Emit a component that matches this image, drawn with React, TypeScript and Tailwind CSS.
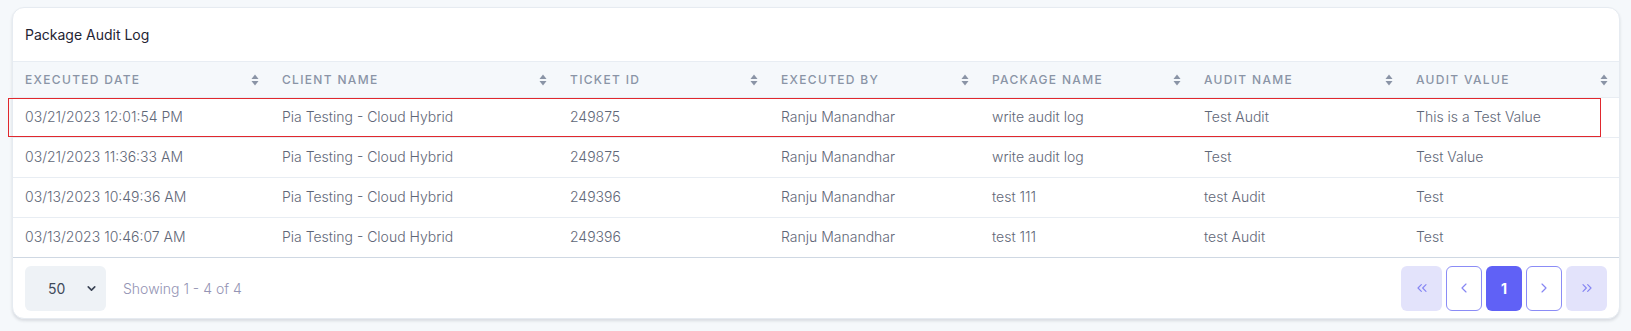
import { ChevronDown, ChevronLeft, ChevronRight, ChevronsLeft, ChevronsRight } from "lucide-react";

const columns = [
	{ name: "Executed Date", width: "w-[257px]" },
	{ name: "Client Name", width: "w-[288px]" },
	{ name: "Ticket ID", width: "w-[211px]" },
	{ name: "Executed By", width: "w-[211px]" },
	{ name: "Package Name", width: "w-[212px]" },
	{ name: "Audit Name", width: "w-[212px]" },
	{ name: "Audit Value", width: "" },
];

const rows = [
	["03/21/2023 12:01:54 PM", "Pia Testing - Cloud Hybrid", "249875", "Ranju Manandhar", "write audit log", "Test Audit", "This is a Test Value"],
	["03/21/2023 11:36:33 AM", "Pia Testing - Cloud Hybrid", "249875", "Ranju Manandhar", "write audit log", "Test", "Test Value"],
	["03/13/2023 10:49:36 AM", "Pia Testing - Cloud Hybrid", "249396", "Ranju Manandhar", "test 111", "test Audit", "Test"],
	["03/13/2023 10:46:07 AM", "Pia Testing - Cloud Hybrid", "249396", "Ranju Manandhar", "test 111", "test Audit", "Test"],
];

function SortIcon() {
	return (
		<svg width="8" height="12" viewBox="0 0 8 12" className="shrink-0">
			<path d="M4 0.5 L7.5 5 H0.5 Z" fill="#8a94a6" />
			<path d="M4 11.5 L7.5 7 H0.5 Z" fill="#8a94a6" />
		</svg>
	);
}

export default function App() {
	return (
		<div
			className="relative min-h-[331px] bg-[#f5f8fb] pl-[12px] pr-[11px] pt-[7px] pb-[11px]"
			style={{ fontFamily: "Inter, 'Noto Sans', sans-serif" }}
		>
			<div className="bg-white rounded-[12px] border border-[#e6ebf1] shadow-[0_2px_3px_rgba(15,23,42,0.12)] overflow-hidden">
				<div className="h-[53px] flex items-center px-[12px] text-[14px] text-[#1f2433]">
					Package Audit Log
				</div>
				<table className="w-full table-fixed border-collapse">
					<thead>
						<tr className="bg-[#f5f8fb] h-[36px] border-y border-[#e8edf3]">
							{columns.map((col) => (
								<th key={col.name} className={`${col.width} pl-[12px] pr-[11px] text-left font-medium`}>
									<div className="flex items-center justify-between pt-[1px]">
										<span className="uppercase text-[12px] tracking-[0.11em] text-[#8a94a6]">{col.name}</span>
										<SortIcon />
									</div>
								</th>
							))}
						</tr>
					</thead>
					<tbody>
						{rows.map((row, idx) => (
							<tr key={idx} className="h-[40px] border-b border-[#e8edf3] last:border-[#cfd8e3]">
								{row.map((cell, i) => (
									<td key={i} className="pl-[12px] pb-[2px] text-[14px] font-light text-[#5f6777] whitespace-nowrap">
										{cell}
									</td>
								))}
							</tr>
						))}
					</tbody>
				</table>
				<div className="h-[60px] flex items-center justify-between pl-[12px] pr-[12px]">
					<div className="flex items-center gap-[17px]">
						<div className="w-[81px] h-[45px] rounded-[6px] bg-[#eef2f6] flex items-center justify-between pl-[23px] pr-[8px]">
							<span className="text-[14px] text-[#3f4a5a]">50</span>
							<ChevronDown size={13} strokeWidth={3} className="text-[#3c4556]" />
						</div>
						<span className="text-[14px] font-light text-[#9494b4]">Showing 1 - 4 of 4</span>
					</div>
					<div className="flex items-center gap-[4px]">
						<button className="w-[41px] h-[45px] rounded-[6px] bg-[#e3e3fb] flex items-center justify-center text-[#8686f3]">
							<ChevronsLeft size={16} strokeWidth={1.75} />
						</button>
						<button className="w-[36px] h-[45px] rounded-[6px] bg-white border border-[#8b8cf6] flex items-center justify-center text-[#8686f3]">
							<ChevronLeft size={16} strokeWidth={1.75} />
						</button>
						<button className="w-[36px] h-[45px] rounded-[6px] bg-[#6061f6] flex items-center justify-center text-white text-[14px] font-bold">
							1
						</button>
						<button className="w-[36px] h-[45px] rounded-[6px] bg-white border border-[#8b8cf6] flex items-center justify-center text-[#8686f3]">
							<ChevronRight size={16} strokeWidth={1.75} />
						</button>
						<button className="w-[41px] h-[45px] rounded-[6px] bg-[#e3e3fb] flex items-center justify-center text-[#8686f3]">
							<ChevronsRight size={16} strokeWidth={1.75} />
						</button>
					</div>
				</div>
			</div>
			<div className="absolute left-[8px] top-[98px] w-[1593px] h-[39px] border border-[#e0282e] pointer-events-none" />
		</div>
	);
}
